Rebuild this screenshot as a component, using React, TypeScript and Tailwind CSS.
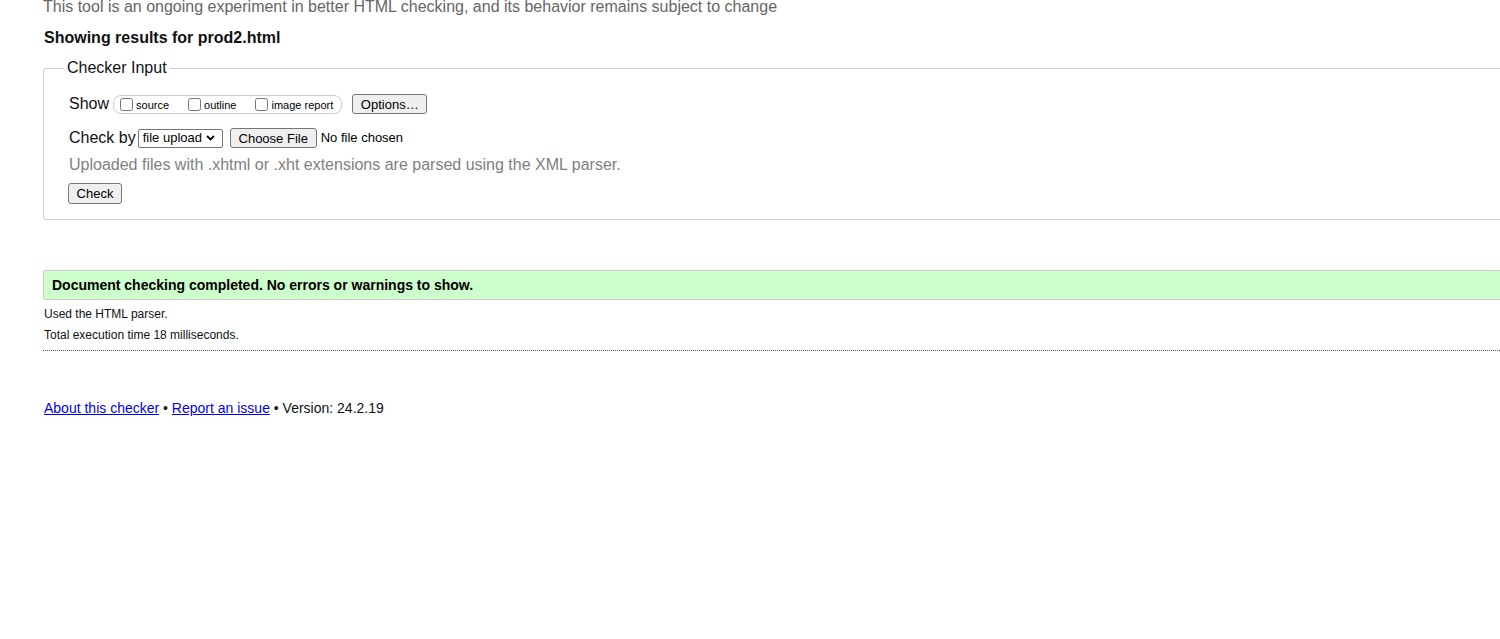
import React from "react";

function Chevron() {
  return (
    <svg width="9" height="6" viewBox="0 0 9 6" className="ml-[4px]">
      <path d="M1 1 L4.5 4.5 L8 1" stroke="#000" strokeWidth="1.8" fill="none" />
    </svg>
  );
}

export default function App() {
  return (
    <div className="w-full h-[639px] overflow-hidden bg-white text-black" style={{ fontFamily: '"Liberation Sans", Arial, sans-serif' }}>
      <div className="w-[1580px] pl-[43px]">
        <p className="text-[16px] leading-[18px] text-[#666] mt-[-2px]">
          This tool is an ongoing experiment in better HTML checking, and its behavior remains subject to change
        </p>
        <p className="text-[16px] leading-[18px] font-bold mt-[13px] ml-[1px] text-[#111]">Showing results for prod2.html</p>

        <fieldset className="mt-[12px] border border-[#ccc] rounded-[3px] pl-[20px] pt-[17px] pb-[14px]">
          <legend className="px-[3px] text-[16px] leading-[18px] text-[#111]">Checker Input</legend>
          <div className="ml-[5px]">
            <div className="flex items-center h-[20px]">
              <span className="text-[16px] leading-[18px] text-[#111]">Show</span>
              <span className="ml-[4px] flex items-center h-[19px] border border-[#ccc] rounded-[8px] pl-[6px] pr-[8px] text-[11px]">
                <input type="checkbox" className="w-[13px] h-[13px] m-0" />
                <span className="ml-[3px] mt-[2px]">source</span>
                <input type="checkbox" className="w-[13px] h-[13px] m-0 ml-[19px]" />
                <span className="ml-[3px] mt-[2px]">outline</span>
                <input type="checkbox" className="w-[13px] h-[13px] m-0 ml-[19px]" />
                <span className="ml-[3px] mt-[2px]">image report</span>
              </span>
              <button className="ml-[10px] h-[20px] w-[75px] bg-[#efefef] border border-[#767676] rounded-[3px] text-[13px] leading-[15px] text-black">
                Options…
              </button>
            </div>
            <div className="flex items-center h-[20px] mt-[14px]">
              <span className="text-[16px] leading-[18px] text-[#111]">Check by</span>
              <span className="ml-[2px] flex items-center h-[19px] w-[85px] border border-[#767676] rounded-[2px] pl-[4px] text-[13px]">
                file upload
                <Chevron />
              </span>
              <button className="ml-[7px] h-[20px] w-[87px] bg-[#efefef] border border-[#767676] rounded-[3px] text-[13px] leading-[15px] text-black">
                Choose File
              </button>
              <span className="ml-[4px] text-[13px]">No file chosen</span>
            </div>
            <p className="mt-[8px] text-[16px] leading-[18px] text-[#808080]">
              Uploaded files with .xhtml or .xht extensions are parsed using the XML parser.
            </p>
            <button className="mt-[9px] -ml-[1px] h-[21px] w-[54px] bg-[#efefef] border border-[#767676] rounded-[3px] text-[13px] leading-[15px] text-black">
              Check
            </button>
          </div>
        </fieldset>

        <div className="mt-[50px] h-[30px] border border-[#ccc] bg-[#ccffcc] rounded-[2px] flex items-center pl-[8px]">
          <span className="text-[14px] font-bold text-black">Document checking completed. No errors or warnings to show.</span>
        </div>
        <p className="mt-[7px] ml-[1px] text-[12px] leading-[14px] text-[#111]">Used the HTML parser.</p>
        <p className="mt-[7px] ml-[1px] text-[12px] leading-[14px] text-[#111]">Total execution time 18 milliseconds.</p>
        <div className="mt-[8px] border-t border-dotted border-[#555]" />

        <p className="mt-[49px] ml-[1px] text-[14px] leading-[16px] text-[#111]">
          <a className="text-[#0000ee] underline">About this checker</a> • <a className="text-[#0000ee] underline">Report an issue</a> • Version: 24.2.19
        </p>
      </div>
    </div>
  );
}
